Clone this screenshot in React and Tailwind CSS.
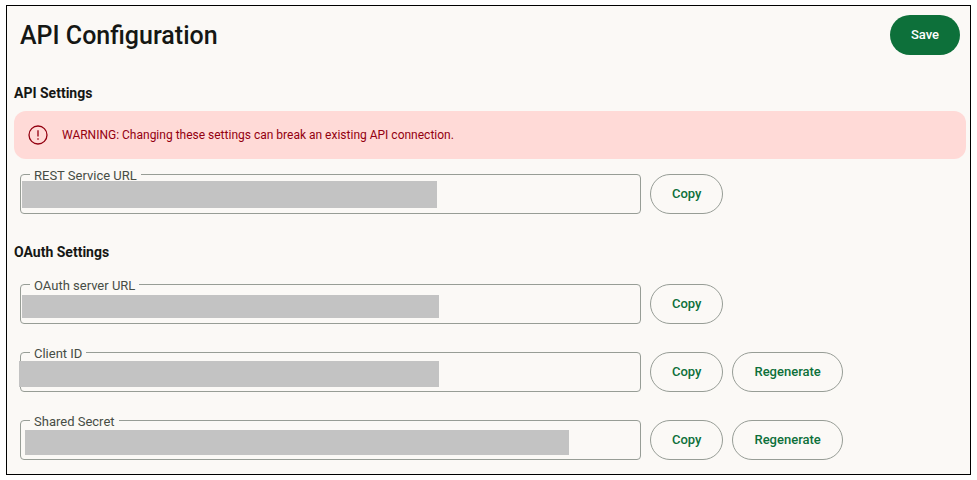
import React, { useState } from 'react';

const OutlineButton = ({ children, onClick }) => (
  <button
    type="button"
    onClick={onClick}
    className="h-10 shrink-0 rounded-full border border-[#979d96] px-[21px] text-[13px] font-medium text-[#0d703a] hover:bg-[#0d703a]/5"
  >
    {children}
  </button>
);

const SettingField = ({ id, label, maskClass, canRegenerate }) => {
  const [value, setValue] = useState('');

  return (
    <div className="flex items-end gap-[9px]">
      <fieldset className="relative h-12 min-w-0 max-w-[621px] flex-1 rounded border border-[#979d96] px-[9px]">
        <legend className="px-1 pt-1 text-[13px] leading-3 text-[#474d45]">
          <label htmlFor={id}>{label}</label>
        </legend>
        <input
          id={id}
          type="text"
          value={value}
          onChange={(e) => setValue(e.target.value)}
          className="block h-7 w-full bg-transparent text-[13px] outline-none"
        />
        {/* value stays hidden behind a solid mask */}
        <span className={`absolute bg-[#c3c3c3] ${maskClass}`} />
      </fieldset>
      <OutlineButton onClick={() => navigator.clipboard?.writeText(value)}>Copy</OutlineButton>
      {canRegenerate && <OutlineButton onClick={() => setValue('')}>Regenerate</OutlineButton>}
    </div>
  );
};

const WarningBanner = ({ children }) => (
  <div role="alert" className="mt-2 flex h-12 items-center gap-[14px] rounded-xl bg-[#ffdad7] px-[14px] text-[#930010]">
    <svg className="h-5 w-5 shrink-0" viewBox="0 0 20 20" fill="none" stroke="currentColor" strokeWidth="1.3">
      <circle cx="10" cy="10" r="9" />
      <path d="M10 5.2v6.4M10 13.2v1.5" />
    </svg>
    <p className="text-[12px] leading-4">{children}</p>
  </div>
);

const App = () => (
  <div className="bg-white px-[6px] py-[5px] font-['Roboto',sans-serif] text-[#151714]">
    <main className="border border-black bg-[#fbf9f6] pt-[9px] pr-1 pb-[14px] pl-[7px]">
      <header className="flex items-center justify-between pr-[6px] pl-[6px]">
        <h1 className="pt-0.5 text-[25px] leading-8 font-medium">API Configuration</h1>
        <button type="button" className="h-10 rounded-full bg-[#0d703a] px-[21px] text-[13px] font-medium text-white hover:bg-[#0a5c2f]">
          Save
        </button>
      </header>

      <section className="mt-7">
        <h2 className="text-[14px] leading-5 font-bold">API Settings</h2>
        <WarningBanner>
          WARNING: Changing these settings can break an existing API connection.
        </WarningBanner>
        <div className="mt-[7px] pl-[6px]">
          <SettingField id="rest-url" label="REST Service URL" maskClass="top-[-1px] left-[1px] h-[27px] w-[415px]" />
        </div>
      </section>

      <section className="mt-7">
        <h2 className="text-[14px] leading-5 font-bold">OAuth Settings</h2>
        <div className="mt-[14px] flex flex-col gap-5 pl-[6px]">
          <SettingField id="oauth-url" label="OAuth server URL" maskClass="top-[3px] left-[1px] h-[23px] w-[417px]" />
          <SettingField id="client-id" label="Client ID" maskClass="top-[1px] left-[-2px] h-[26px] w-[420px]" canRegenerate />
          <SettingField id="shared-secret" label="Shared Secret" maskClass="top-0.5 left-1 h-[25px] w-[544px]" canRegenerate />
        </div>
      </section>
    </main>
  </div>
);

export default App;
